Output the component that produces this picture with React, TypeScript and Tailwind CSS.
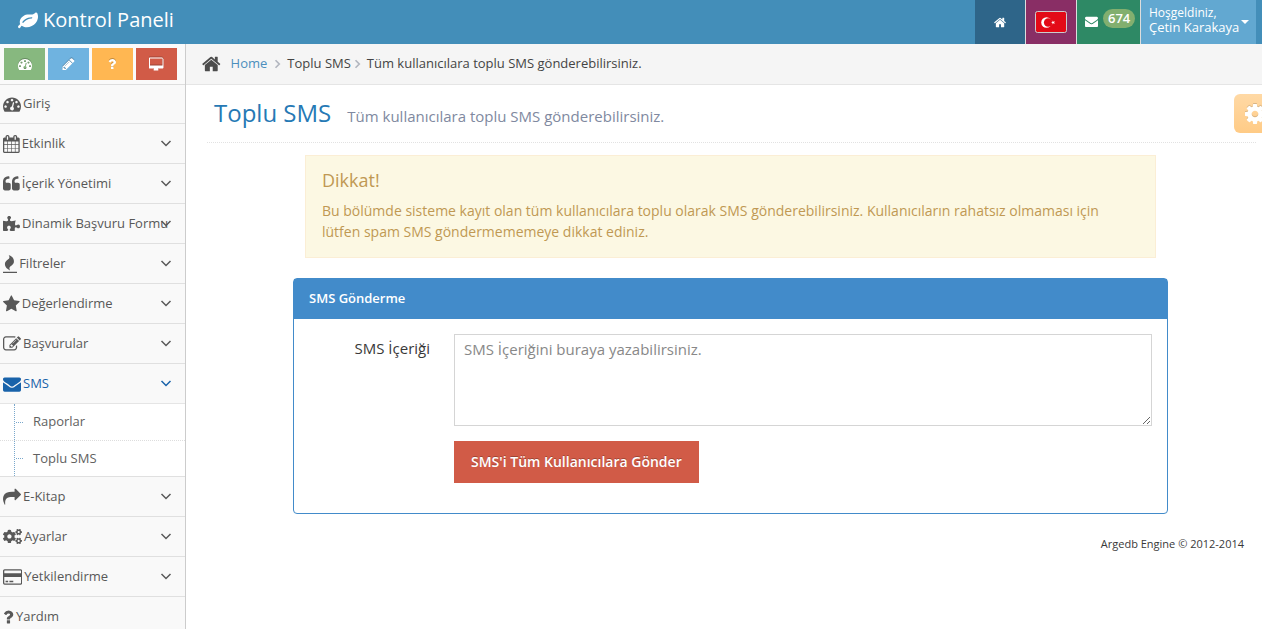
import { useState } from "react";
import type { ReactNode } from "react";
import { FaCogs, FaPuzzlePiece } from "react-icons/fa";
import clsx from "clsx";

type GlyphDef = { box: string; d: string };

const glyphs = {
  leaf: {
    box: "0 0 1792 1792",
    d: "M1280 704q0-26-19-45t-45-19q-172 0-318 49.500t-259.500 134-235.500 219.500q-19 21-19 45 0 26 19 45t45 19q24 0 45-19 27-24 74-71t67-66q137-124 268.500-176t313.500-52q26 0 45-19t19-45zM1792 594q0 95-20 193-46 224-184.500 383t-357.500 268q-214 108-438 108-148 0-286-47-15-5-88-42t-96-37q-16 0-39.500 32t-45 70-52.500 70-60 32q-43 0-63.500-17.500t-45.500-59.500q-2-4-6-11t-5.500-10-3-9.500-1.500-13.500q0-35 31-73.500t68-65.500 68-56 31-48q0-4-14-38t-16-44q-9-51-9-104 0-115 43.500-220t119-184.500 170.500-139 204-95.500q55-18 145-25.500t179.500-9 178.500-6 163.500-24 113.500-56.500l29.500-29.500 29.500-28 27-20 36.500-16 43.500-4.500q39 0 70.500 46t47.500 112 24 124 8 96z",
  },
  dashboard: {
    box: "0 0 1792 1792",
    d: "M384 1152q0-53-37.500-90.500t-90.500-37.500-90.500 37.500-37.500 90.500 37.500 90.500 90.500 37.500 90.500-37.500 37.500-90.500zM576 704q0-53-37.500-90.500t-90.500-37.500-90.500 37.500-37.500 90.500 37.500 90.500 90.500 37.500 90.500-37.500 37.500-90.500zM1004 1185l101-382q6-26-7.500-48.500t-38.500-29.500-48 6.500-30 39.500l-101 382q-60 5-107 43.500t-63 98.500q-20 77 20 146t117 89 146-20 89-117q16-60-6-117t-72-91zM1664 1152q0-53-37.500-90.500t-90.500-37.500-90.500 37.500-37.500 90.500 37.500 90.500 90.500 37.500 90.500-37.500 37.500-90.500zM1024 512q0-53-37.500-90.500t-90.500-37.500-90.500 37.500-37.500 90.500 37.500 90.500 90.500 37.500 90.500-37.500 37.500-90.500zM1472 704q0-53-37.500-90.500t-90.500-37.500-90.500 37.500-37.500 90.500 37.500 90.500 90.500 37.500 90.500-37.500 37.500-90.500zM1792 1152q0 261-141 483-19 29-54 29h-1402q-35 0-54-29-141-221-141-483 0-182 71-348t191-286 286-191 348-71 348 71 286 191 191 286 71 348z",
  },
  home: {
    box: "64 0 1664 1792",
    d: "M1472 992v480q0 26-19 45t-45 19h-384v-384h-256v384h-384q-26 0-45-19t-19-45v-480q0-1 .5-3t.5-3l575-474 575 474q1 2 1 6zM1695 923l-62 74q-8 9-21 11h-3q-13 0-21-7l-692-577-692 577q-12 8-24 7-13-2-21-11l-62-74q-8-10-7-23.500t11-21.500l719-599q32-26 76-26t76 26l244 204v-195q0-14 9-23t23-9h192q14 0 23 9t9 23v408l219 182q10 8 11 21.500t-7 23.500z",
  },
  envelope: {
    box: "0 0 1792 1792",
    d: "M1792 710v794q0 66-47 113t-113 47h-1472q-66 0-113-47t-47-113v-794q44 49 101 87 362 246 497 345 57 42 92.500 65.500t94.500 48 110 24.500h2q51 0 110-24.500t94.500-48 92.500-65.500q170-123 498-345 57-39 100-87zM1792 416q0 79-49 151t-122 123q-376 261-468 325-10 7-42.500 31t-54 38.500-52 32.500-57.500 27-50 9h-2q-23 0-50-9t-57.500-27-52-32.500-54-38.500-42.500-31q-91-64-262-182.500t-205-142.500q-62-42-117-115.500t-55-136.500q0-78 41.500-130t118.500-52h1472q65 0 112.500 47t47.500 113z",
  },
  question: {
    box: "384 0 1088 1792",
    d: "M1088 1256v240q0 16-12 28t-28 12h-240q-16 0-28-12t-12-28v-240q0-16 12-28t28-12h240q16 0 28 12t12 28zM1404 656q0 54-15.500 101t-35 76.500-55 59.500-57.500 43.500-61 35.500q-41 23-68.500 65t-27.500 67q0 17-12 32.500t-28 15.500h-240q-15 0-25.500-18.500t-10.500-37.500v-45q0-83 65-156.500t143-108.500q59-27 84-56t25-76q0-42-46.500-74t-107.500-32q-65 0-108 29-35 25-107 115-13 16-31 16-12 0-25-8l-164-125q-13-10-15.500-25t5.500-28q160-266 464-266 80 0 161 31t146 83 106 127.500 41 158.500z",
  },
  pencil: {
    box: "64 0 1664 1792",
    d: "M491 1536l91-91-235-235-91 91v107h128v128h107zM1014 608q0-22-22-22-10 0-17 7l-542 542q-7 7-7 17 0 22 22 22 10 0 17-7l542-542q7-7 7-17zM960 416l416 416-832 832h-416v-416zM1643 512q0 53-37 90l-166 166-416-416 166-165q36-38 90-38 53 0 91 38l235 234q37 39 37 91z",
  },
  desktop: {
    box: "0 -64 1856 1792",
    d: "M1728 992v-832q0-13-9.500-22.500t-22.500-9.500h-1536q-13 0-22.500 9.500t-9.500 22.500v832q0 13 9.500 22.500t22.500 9.500h1536q13 0 22.500-9.500t9.500-22.500zM1856 160v1088q0 66-47 113t-113 47h-544q0 37 16 77.500t32 71 16 43.500q0 26-19 45t-45 19h-512q-26 0-45-19t-19-45q0-14 16-44t32-70 16-78h-544q-66 0-113-47t-47-113v-1088q0-66 47-113t113-47h1536q66 0 113 47t47 113z",
  },
  cog: {
    box: "128 128 1536 1536",
    d: "M1152 896q0-106-75-181t-181-75-181 75-75 181 75 181 181 75 181-75 75-181zM1664 787v222q0 12-8 23t-20 13l-185 28q-19 54-39 91 35 50 107 138 10 12 10 25t-9 23q-27 37-99 108t-94 71q-12 0-26-9l-138-108q-44 23-91 38-16 136-29 186-7 28-36 28h-222q-14 0-24.500-8.500t-11.500-21.500l-28-184q-49-16-90-37l-141 107q-10 9-25 9-14 0-25-11-126-114-165-168-7-10-7-23 0-12 8-23 15-21 51-66.500t54-70.500q-27-50-41-99l-183-27q-13-2-21-12.500t-8-23.500v-222q0-12 8-23t19-13l186-28q14-46 39-92-40-57-107-138-10-12-10-24 0-10 9-23 26-36 98.500-107.500t94.500-71.500q13 0 26 10l138 107q44-23 91-38 16-136 29-186 7-28 36-28h222q14 0 24.500 8.500t11.500 21.500l28 184q49 16 90 37l142-107q9-9 24-9 13 0 25 10 129 119 165 170 7 8 7 22 0 12-8 23-15 21-51 66.500t-54 70.500q26 50 41 98l183 28q13 2 21 12.500t8 23.500z",
  },
  calendar: {
    box: "64 0 1664 1792",
    d: "M192 1664h288v-288h-288v288zM544 1664h320v-288h-320v288zM192 1312h288v-320h-288v320zM544 1312h320v-320h-320v320zM192 928h288v-288h-288v288zM928 1664h320v-288h-320v288zM544 928h320v-288h-320v288zM1312 1664h288v-288h-288v288zM928 1312h320v-320h-320v320zM576 448v-288q0-13-9.500-22.500t-22.500-9.500h-64q-13 0-22.500 9.500t-9.500 22.500v288q0 13 9.500 22.500t22.500 9.500h64q13 0 22.500-9.500t9.500-22.500zM1312 1312h288v-320h-288v320zM928 928h320v-288h-320v288zM1312 928h288v-288h-288v288zM1344 448v-288q0-13-9.500-22.500t-22.500-9.500h-64q-13 0-22.500 9.500t-9.500 22.500v288q0 13 9.500 22.500t22.500 9.500h64q13 0 22.500-9.500t9.500-22.500zM1728 384v1280q0 52-38 90t-90 38h-1408q-52 0-90-38t-38-90v-1280q0-52 38-90t90-38h128v-96q0-66 47-113t113-47h64q66 0 113 47t47 113v96h384v-96q0-66 47-113t113-47h64q66 0 113 47t47 113v96h128q52 0 90 38t38 90z",
  },
  quote: {
    box: "64 0 1664 1792",
    d: "M832 960v384q0 80-56 136t-136 56h-384q-80 0-136-56t-56-136v-704q0-104 40.500-198.500t109.500-163.500 163.500-109.500 198.500-40.500h64q26 0 45 19t19 45v128q0 26-19 45t-45 19h-64q-106 0-181 75t-75 181v32q0 40 28 68t68 28h224q80 0 136 56t56 136zM1728 960v384q0 80-56 136t-136 56h-384q-80 0-136-56t-56-136v-704q0-104 40.500-198.500t109.500-163.500 163.500-109.500 198.500-40.500h64q26 0 45 19t19 45v128q0 26-19 45t-45 19h-64q-106 0-181 75t-75 181v32q0 40 28 68t68 28h224q80 0 136 56t56 136z",
  },
  fire: {
    box: "192 0 1408 1792",
    d: "M1600 1696v64q0 13-9.500 22.500t-22.500 9.500h-1344q-13 0-22.500-9.500t-9.500-22.500v-64q0-13 9.500-22.500t22.500-9.500h1344q13 0 22.500 9.500t9.500 22.500zM1280 640q0 78-24.500 144t-64 112.500-87.500 88-96 77.500-87.500 72-64 81.500-24.500 96.500q0 96 67 224l-4-1 1 1q-90-41-160-83t-138.500-100-113.500-122.500-72.500-150.500-27.500-184q0-78 24.500-144t64-112.500 87.500-88 96-77.500 87.500-72 64-81.500 24.500-96.500q0-94-66-224l3 1-1-1q90 41 160 83t138.500 100 113.500 122.500 72.500 150.500 27.500 184z",
  },
  star: {
    box: "64 0 1664 1792",
    d: "M1728 647q0 22-26 48l-363 354 86 500q1 7 1 20 0 21-10.500 35.500t-30.500 14.500q-19 0-40-12l-449-236-449 236q-22 12-40 12-21 0-31.500-14.500t-10.500-35.500q0-6 2-20l86-500-364-354q-25-27-25-48 0-37 56-46l502-73 225-455q19-41 49-41t49 41l225 455 502 73q56 9 56 46z",
  },
  edit: {
    box: "0 0 1792 1792",
    d: "M888 1184l116-116-152-152-116 116v56h96v96h56zM1328 464q-16-16-33 1l-350 350q-17 17-1 33t33-1l350-350q17-17 1-33zM1408 1058v190q0 119-84.500 203.500t-203.500 84.500h-832q-119 0-203.500-84.500t-84.500-203.500v-832q0-119 84.500-203.500t203.500-84.500h832q63 0 117 25 15 7 18 23 3 17-9 29l-49 49q-14 14-32 8-23-6-45-6h-832q-66 0-113 47t-47 113v832q0 66 47 113t113 47h832q66 0 113-47t47-113v-126q0-13 9-22l64-64q15-15 35-7t20 29zM1312 320l288 288-672 672h-288v-288zM1756 452l-92 92-288-288 92-92q28-28 68-28t68 28l152 152q28 28 28 68t-28 68z",
  },
  share: {
    box: "0 0 1792 1792",
    d: "M1792 640q0 26-19 45l-512 512q-19 19-45 19t-45-19-19-45v-256h-224q-98 0-175.500 6t-154 21.500-133 42.500-105.500 69.500-80 101-48.500 138.500-17.500 181q0 55 5 123 0 6 2.500 23.500t2.500 26.500q0 15-8.500 25t-23.500 10q-16 0-28-17-7-9-13-22t-13.500-30-10.500-24q-127-285-127-451 0-199 53-333 162-403 875-403h224v-256q0-26 19-45t45-19 45 19l512 512q19 19 19 45z",
  },
  card: {
    box: "0 0 1920 1792",
    d: "M1760 128q66 0 113 47t47 113v1216q0 66-47 113t-113 47h-1600q-66 0-113-47t-47-113v-1216q0-66 47-113t113-47h1600zM160 256q-13 0-22.500 9.500t-9.500 22.500v224h1664v-224q0-13-9.500-22.500t-22.500-9.500h-1600zM1760 1536q13 0 22.500-9.500t9.500-22.500v-608h-1664v608q0 13 9.500 22.500t22.500 9.500h1600zM256 1408v-128h256v128h-256zM640 1408v-128h384v128h-384z",
  },
} satisfies Record<string, GlyphDef>;

type GlyphName = keyof typeof glyphs;

function Glyph({ name, className }: { name: GlyphName; className?: string }) {
  return (
    <svg
      viewBox={glyphs[name].box}
      className={clsx("w-auto shrink-0 fill-current", className)}
      aria-hidden="true"
    >
      <path d={glyphs[name].d} fillRule={name === "card" ? "evenodd" : "nonzero"} />
    </svg>
  );
}

type MenuItem = {
  label: string;
  icon: ReactNode;
  leaf?: boolean;
  children?: string[];
};

const g = (name: GlyphName) => <Glyph name={name} className="h-[18px]" />;

const menu: MenuItem[] = [
  { label: "Giriş", icon: g("dashboard"), leaf: true },
  { label: "Etkinlik", icon: g("calendar") },
  { label: "İçerik Yönetimi", icon: g("quote") },
  {
    label: "Dinamik Başvuru Formu",
    icon: <FaPuzzlePiece className="size-[17px] shrink-0" />,
  },
  { label: "Filtreler", icon: g("fire") },
  { label: "Değerlendirme", icon: g("star") },
  { label: "Başvurular", icon: g("edit") },
  { label: "SMS", icon: g("envelope"), children: ["Raporlar", "Toplu SMS"] },
  { label: "E-Kitap", icon: g("share") },
  { label: "Ayarlar", icon: <FaCogs className="size-[19px] shrink-0" /> },
  { label: "Yetkilendirme", icon: g("card") },
  { label: "Yardım", icon: g("question"), leaf: true },
];

const shortcuts: { icon: GlyphName; label: string; color: string }[] = [
  { icon: "dashboard", label: "Panel", color: "bg-[#87b87f]" },
  { icon: "pencil", label: "Düzenle", color: "bg-[#6fb3e0]" },
  { icon: "question", label: "Yardım", color: "bg-[#ffb752]" },
  { icon: "desktop", label: "Site", color: "bg-[#d15b47]" },
];

function Chevron({ className }: { className?: string }) {
  return (
    <svg
      viewBox="0 0 12 12"
      className={clsx("fill-none stroke-current", className)}
      aria-hidden="true"
    >
      <path d="M1.500 3L6 7.500L10.500 3" />
    </svg>
  );
}

function Navbar() {
  return (
    <header className="flex h-11 shrink-0 justify-between bg-[#438eb9] pr-1.5 text-white">
      <a href="#" className="flex items-center gap-[5px] pb-1 pl-[18px] text-xl">
        <Glyph name="leaf" className="h-5" />
        Kontrol Paneli
      </a>
      <div className="flex divide-x divide-[#ddd]">
        <a href="#" aria-label="Ana sayfa" className="flex w-[51px] items-center justify-center bg-[#2e6589]">
          <Glyph name="home" className="h-[13px]" />
        </a>
        <a href="#" aria-label="Türkçe" className="flex w-[51px] items-center justify-center bg-[#892e65]">
          <svg viewBox="0 0 32 22" className="h-[22px] w-8" aria-hidden="true">
            <rect x=".5" y=".5" width="31" height="21" rx="2" fill="#e30a17" stroke="#ccc" />
            <circle cx="11.500" cy="11.500" r="5.300" fill="#fff" />
            <circle cx="13.200" cy="11.500" r="4.300" fill="#e30a17" />
            <path fill="#fff" d="M16 11.500l1.500-.5v-1.600l1 1.300 1.500-.5-.9 1.300.9 1.300-1.500-.5-1 1.300v-1.600z" />
          </svg>
        </a>
        <a href="#" className="flex w-16 items-start gap-[5px] bg-[#2e8965] pl-2">
          <Glyph name="envelope" className="mt-[15px] h-[13px]" />
          <span className="mt-[9px] rounded-full bg-[#82af6f] px-[5px] text-[13px] leading-[19px] font-semibold">
            674
          </span>
        </a>
        <button type="button" className="flex w-[115px] items-center gap-0.5 bg-[#62a8d1] pl-2 text-left">
          <span className="pb-1 text-[13px] leading-[15px] whitespace-nowrap">
            <small className="block text-xs leading-[15px]">Hoşgeldiniz,</small>
            Çetin Karakaya
          </span>
          <svg viewBox="0 0 8 4" className="h-1 w-2 shrink-0 fill-current" aria-hidden="true">
            <path d="M0 0h8L4 4z" />
          </svg>
        </button>
      </div>
    </header>
  );
}

function Sidebar() {
  const [open, setOpen] = useState("SMS");

  return (
    <aside className="w-[186px] shrink-0 border-r border-[#ccc] bg-[#f2f2f2]">
      <div className="flex h-[41px] gap-[3px] border-b border-[#ddd] bg-[#fafafa] p-1">
        {shortcuts.map((s) => (
          <button
            key={s.label}
            type="button"
            aria-label={s.label}
            className={clsx("flex h-8 w-[41px] items-center justify-center text-white", s.color)}
          >
            <Glyph
              name={s.icon}
              className="h-[14px] drop-shadow-[0_-1px_0_rgba(0,0,0,0.25)]"
            />
          </button>
        ))}
      </div>
      <ul className="text-[13px] text-[#585858]">
        {menu.map((item) => (
          <li key={item.label} className="group border-[#e0e0e0] not-first:border-t">
            <a
              href="#"
              onClick={() => setOpen(item.label)}
              className={clsx(
                "relative flex h-[39px] items-center gap-0.5 bg-[#f9f9f9] pl-[3px] whitespace-nowrap group-first:h-[38px]",
                item.children && open === item.label && "text-[#1963aa]"
              )}
            >
              {item.icon}
              {item.label}
              {!item.leaf && <Chevron className="absolute right-[13px] size-3 stroke-[1.5]" />}
            </a>
            {item.children && open === item.label && (
              <ul className="relative border-t border-[#e5e5e5] bg-white before:absolute before:inset-y-0 before:left-[14px] before:border-l before:border-dotted before:border-[#7aa8cc]">
                {item.children.map((child, i) => (
                  <li key={child} className={clsx("h-9", i > 0 && "border-t border-dotted border-[#ddd]")}>
                    <a href="#" className="flex h-full items-center gap-2.5 pl-4 text-[#616161]">
                      <span className="w-[7px] border-t border-dotted border-[#7aa8cc]" />
                      {child}
                    </a>
                  </li>
                ))}
              </ul>
            )}
          </li>
        ))}
      </ul>
    </aside>
  );
}

function Breadcrumbs() {
  return (
    <nav className="flex h-[41px] items-center border-b border-[#e5e5e5] bg-[#f5f5f5] pl-4 text-[13px] text-[#444]">
      <Glyph name="home" className="mr-2.5 h-5 text-[#4c4c4c]" />
      <a href="#" className="text-[#4c8fbd]">
        Home
      </a>
      <Chevron className="mr-1 ml-1.5 size-2.5 -rotate-90 stroke-2 text-[#b2b6bf]" />
      <span>Toplu SMS</span>
      <Chevron className="mr-1 ml-0.5 size-2.5 -rotate-90 stroke-2 text-[#b2b6bf]" />
      <span>Tüm kullanıcılara toplu SMS gönderebilirsiniz.</span>
    </nav>
  );
}

export default function App() {
  const [message, setMessage] = useState("");

  return (
    <div className="flex h-screen flex-col overflow-hidden bg-white font-['Open_Sans',sans-serif] text-[13px] text-[#393939]">
      <Navbar />
      <div className="flex flex-1">
        <Sidebar />
        <main className="relative min-w-0 flex-1">
          <Breadcrumbs />
          <div className="pr-1.5 pl-[21px]">
            <h1 className="flex h-[58px] items-baseline gap-4 border-b border-dotted border-[#e2e2e2] pt-2.5 pl-[7px] text-2xl leading-9 text-[#2679b5]">
              Toplu SMS
              <small className="text-[15px] text-[#8089a0]">
                Tüm kullanıcılara toplu SMS gönderebilirsiniz.
              </small>
            </h1>

            <div className="mr-[88px] ml-[86px] pt-3">
              <div
                role="alert"
                className="mx-3 border border-[#fbeed5] bg-[#fcf8e3] pt-3.5 pr-8 pb-[15px] pl-4 text-sm leading-[21px] text-[#c09853]"
              >
                <h4 className="mb-[9px] text-lg leading-[21px]">Dikkat!</h4>
                Bu bölümde sisteme kayıt olan tüm kullanıcılara toplu olarak SMS gönderebilirsiniz.
                Kullanıcıların rahatsız olmaması için lütfen spam SMS göndermememeye dikkat ediniz.
              </div>

              <section className="mt-5 rounded border border-[#428bca]">
                <h2 className="bg-[#428bca] px-[15px] pt-[9px] pb-[11px] text-[13px] leading-5 font-semibold text-white">
                  SMS Gönderme
                </h2>
                <form
                  className="flex gap-6 pt-[15px] pr-[15px] pb-[30px]"
                  onSubmit={(e) => e.preventDefault()}
                >
                  <label htmlFor="sms" className="w-[136px] shrink-0 pt-1 text-right text-[15px] leading-[21px]">
                    SMS İçeriği
                  </label>
                  <div className="flex flex-1 flex-col items-start gap-[15px]">
                    <textarea
                      id="sms"
                      value={message}
                      onChange={(e) => setMessage(e.target.value)}
                      placeholder="SMS İçeriğini buraya yazabilirsiniz."
                      className="h-[92px] w-full border border-[#d5d5d5] px-[9px] py-1 text-[15px] leading-[21px] text-[#696969] placeholder:text-[#888]"
                    />
                    <button
                      type="submit"
                      className="h-[42px] bg-[#d15b47] px-[17px] text-sm font-semibold text-white text-shadow-[0_-1px_0_rgba(0,0,0,0.25)]"
                    >
                      SMS'i Tüm Kullanıcılara Gönder
                    </button>
                  </div>
                </form>
              </section>
            </div>
            <footer className="mt-5 pr-3 text-right text-[11px] leading-5">
              Argedb Engine © 2012-2014
            </footer>
          </div>

          <button
            type="button"
            aria-label="Ayarlar"
            className="absolute top-[50px] right-0 flex h-[39px] w-7 items-center overflow-hidden rounded-l-md bg-linear-to-b from-[#ffd9a5] to-[#ffcb86] pl-[11px] text-white"
          >
            <Glyph name="cog" className="h-5 drop-shadow-[0_-1px_0_rgba(0,0,0,0.15)]" />
          </button>
        </main>
      </div>
    </div>
  );
}
